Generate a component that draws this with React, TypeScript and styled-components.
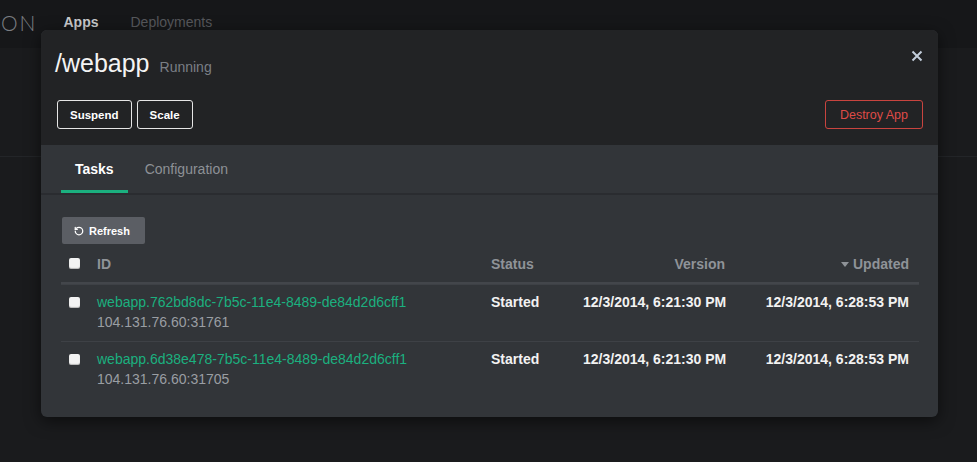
import React from 'react'
import styled, { createGlobalStyle } from 'styled-components'
import { RotateCcw } from 'lucide-react'

const colors = {
  page: '#1a1b1d',
  nav: '#161719',
  modalHead: '#222325',
  modalBody: '#323539',
  green: '#1bb07f',
  red: '#df4b47',
  muted: '#8f9398',
  text: '#f2f2f2',
}

const GlobalStyle = createGlobalStyle`
  html, body, #root {
    height: 100%;
  }
  body {
    margin: 0;
    background: ${colors.page};
    font-family: "Liberation Sans", Arial, sans-serif;
    color: ${colors.text};
    overflow: hidden;
  }
  * {
    box-sizing: border-box;
  }
`

const Page = styled.div`
  position: relative;
  height: 100%;
`
const NavBar = styled.nav`
  display: flex;
  align-items: center;
  height: 48px;
  padding-bottom: 4px;
  background: ${colors.nav};
`
const Brand = styled.span`
  font-family: "Lato", "Open Sans", sans-serif;
  font-weight: 300;
  font-size: 21px;
  letter-spacing: 2px;
  color: #7b7e82;
  padding-left: 1px;
  margin-right: 26px;
`
const NavLink = styled.a<{ $active?: boolean }>`
  font-size: 14px;
  font-weight: ${p => (p.$active ? 'bold' : 'normal')};
  color: ${p => (p.$active ? '#c9cacc' : '#56585c')};
  margin-right: 32px;
`
const HeaderBand = styled.div`
  height: 109px;
  border-bottom: 1px solid #232528;
`

const Overlay = styled.div`
  position: absolute;
  inset: 0;
  display: flex;
  justify-content: center;
  align-items: flex-start;
  padding-top: 30px;
`
const Modal = styled.div`
  width: 897px;
  margin-left: 2px;
  border-radius: 6px;
  overflow: hidden;
  background: ${colors.modalBody};
  box-shadow: 0 4px 16px rgba(0, 0, 0, 0.55);
`
const ModalHeader = styled.div`
  background: ${colors.modalHead};
  padding: 19px 15px 16px 16px;
`
const TitleRow = styled.div`
  display: flex;
  align-items: baseline;
`
const Title = styled.h1`
  margin: 0 10px 0 -2px;
  font-size: 25px;
  line-height: 28px;
  font-weight: normal;
  color: #f4f4f4;
`
const Subtitle = styled.span`
  font-size: 14px;
  color: #7b7f85;
  flex: 1;
`
const CloseButton = styled.button`
  align-self: flex-start;
  margin-top: 1px;
  padding: 0;
  border: 0;
  background: none;
  display: flex;
`
const Actions = styled.div`
  display: flex;
  justify-content: space-between;
  margin-top: 23px;
`
const ButtonGroup = styled.div`
  display: flex;
  gap: 5px;
`
const OutlineButton = styled.button<{ $danger?: boolean }>`
  height: 29px;
  padding: 0 ${p => (p.$danger ? '14px' : '12px')};
  border-radius: 3px;
  background: transparent;
  font-family: inherit;
  font-size: ${p => (p.$danger ? '12.5px' : '11.5px')};
  font-weight: ${p => (p.$danger ? 'normal' : 'bold')};
  color: ${p => (p.$danger ? colors.red : '#ffffff')};
  border: 1px solid ${p => (p.$danger ? '#c9443f' : '#e6e6e6')};
`

const TabBar = styled.div`
  display: flex;
  height: 50px;
  padding: 0 20px;
  border-bottom: 2px solid #2a2c30;
`
const Tab = styled.div<{ $active?: boolean }>`
  display: flex;
  align-items: center;
  height: 48px;
  padding: 3px 14px 0;
  margin-right: 3px;
  font-size: 14px;
  font-weight: ${p => (p.$active ? 'bold' : 'normal')};
  color: ${p => (p.$active ? '#ffffff' : '#8d9196')};
  border-bottom: 3px solid ${p => (p.$active ? colors.green : 'transparent')};
`

const Body = styled.div`
  padding: 22px 19px 19px 20px;
`
const RefreshButton = styled.button`
  display: flex;
  align-items: center;
  gap: 5px;
  height: 27px;
  margin-left: 1px;
  padding: 0 15px 0 12px;
  border: 0;
  border-radius: 2px;
  background: #5b5e64;
  color: #ffffff;
  font-family: inherit;
  font-size: 11px;
  font-weight: bold;
`

const TableRow = styled.div<{ $head?: boolean }>`
  display: grid;
  grid-template-columns: 26px 1fr 92px 162px 184px;
  align-items: ${p => (p.$head ? 'center' : 'start')};
  height: ${p => (p.$head ? '40px' : 'auto')};
  padding: ${p => (p.$head ? '1px 0 0' : '7px 0 9px')};
  border-bottom: ${p => (p.$head ? '2px solid #43464b' : '0')};
  & + & {
    border-top: 1px solid #3e4146;
  }
  & + &:nth-child(2) {
    border-top: 0;
  }
`
const Cell = styled.div<{ $right?: boolean; $head?: boolean }>`
  padding: 0 10px;
  font-size: 14px;
  line-height: 20px;
  font-weight: bold;
  white-space: nowrap;
  text-align: ${p => (p.$right ? 'right' : 'left')};
  color: ${p => (p.$head ? colors.muted : colors.text)};
`
const CheckCell = styled.div`
  display: flex;
  justify-content: center;
  align-items: center;
  height: 20px;
`
const Check = styled.span`
  width: 11px;
  height: 11px;
  border-radius: 2px;
  background: #f3f3f3;
  box-shadow: inset 0 -1px 1px rgba(0, 0, 0, 0.25);
`
const TaskId = styled.div`
  font-weight: normal;
  color: ${colors.green};
`
const TaskHost = styled.div`
  font-weight: normal;
  color: #9a9ea3;
`
const Caret = styled.svg`
  margin-right: 4px;
  vertical-align: 2px;
`

const tasks = [
  {
    id: 'webapp.762bd8dc-7b5c-11e4-8489-de84d2d6cff1',
    host: '104.131.76.60:31761',
    status: 'Started',
    version: '12/3/2014, 6:21:30 PM',
    updated: '12/3/2014, 6:28:53 PM',
  },
  {
    id: 'webapp.6d38e478-7b5c-11e4-8489-de84d2d6cff1',
    host: '104.131.76.60:31705',
    status: 'Started',
    version: '12/3/2014, 6:21:30 PM',
    updated: '12/3/2014, 6:28:53 PM',
  },
]

export default function App(): React.ReactElement {
  return (
    <Page>
      <GlobalStyle />
      <NavBar>
        <Brand>ON</Brand>
        <NavLink $active>Apps</NavLink>
        <NavLink>Deployments</NavLink>
      </NavBar>
      <HeaderBand />

      <Overlay>
        <Modal>
          <ModalHeader>
            <TitleRow>
              <Title>/webapp</Title>
              <Subtitle>Running</Subtitle>
              <CloseButton aria-label="Close">
                <svg width="12" height="12" viewBox="0 0 12 12">
                  <path d="M1.5 1.5 L10.5 10.5 M10.5 1.5 L1.5 10.5" stroke="#c3cedb" strokeWidth="2" />
                </svg>
              </CloseButton>
            </TitleRow>
            <Actions>
              <ButtonGroup>
                <OutlineButton>Suspend</OutlineButton>
                <OutlineButton>Scale</OutlineButton>
              </ButtonGroup>
              <OutlineButton $danger>Destroy App</OutlineButton>
            </Actions>
          </ModalHeader>

          <TabBar>
            <Tab $active>Tasks</Tab>
            <Tab>Configuration</Tab>
          </TabBar>

          <Body>
            <RefreshButton>
              <RotateCcw size={10} strokeWidth={3} />
              Refresh
            </RefreshButton>

            <div>
              <TableRow $head>
                <CheckCell>
                  <Check />
                </CheckCell>
                <Cell $head>ID</Cell>
                <Cell $head>Status</Cell>
                <Cell $head $right>Version</Cell>
                <Cell $head $right>
                  <Caret width="8" height="5" viewBox="0 0 8 5">
                    <path d="M0 0 H8 L4 5 Z" fill={colors.muted} />
                  </Caret>
                  Updated
                </Cell>
              </TableRow>
              {tasks.map(task => (
                <TableRow key={task.id}>
                  <CheckCell>
                    <Check />
                  </CheckCell>
                  <Cell>
                    <TaskId>{task.id}</TaskId>
                    <TaskHost>{task.host}</TaskHost>
                  </Cell>
                  <Cell>{task.status}</Cell>
                  <Cell $right>{task.version}</Cell>
                  <Cell $right>{task.updated}</Cell>
                </TableRow>
              ))}
            </div>
          </Body>
        </Modal>
      </Overlay>
    </Page>
  )
}
